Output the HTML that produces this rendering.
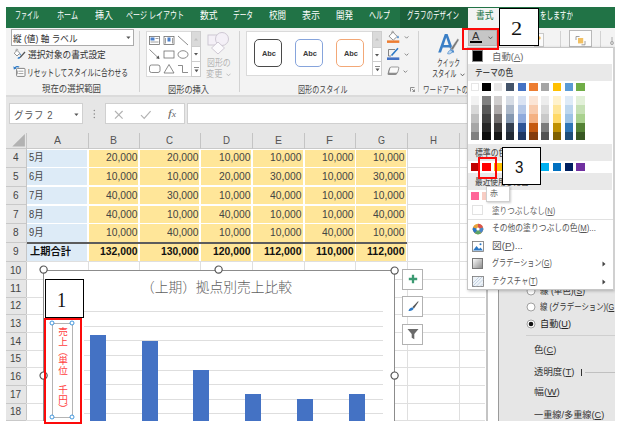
<!DOCTYPE html>
<html lang="ja"><head><meta charset="utf-8"><title>Excel</title><style>
html,body{margin:0;padding:0;background:#fff;}
body{width:620px;height:428px;position:relative;overflow:hidden;font-family:'Liberation Sans','Noto Sans CJK JP',sans-serif;}
.b{position:absolute;display:block;}
.t{position:absolute;white-space:nowrap;transform-origin:0 50%;display:block;}
u{text-decoration:underline;text-underline-offset:1px;}
</style></head><body>
<div class="b" style="left:6px;top:7px;width:609px;height:20.5px;background:#217346;"></div>
<div class="b" style="left:400px;top:7px;width:68px;height:20.5px;background:#1c5f3a;"></div>
<div class="b" style="left:468px;top:8px;width:32px;height:20px;background:#f3f3f3;"></div>
<div class="b" style="left:6px;top:27.5px;width:609px;height:67.7px;background:#f3f3f3;"></div>
<div class="b" style="left:6px;top:95.2px;width:609px;height:35.8px;background:#e6e6e6;"></div>
<div class="b" style="left:6px;top:95.2px;width:609px;height:1.3999999999999915px;background:#dbdbdb;"></div>
<span class="t" id="t0" style="left:15px;top:9.3px;font-size:10px;line-height:14.0px;color:#fff;font-weight:400;font-family:'Liberation Sans','Noto Sans CJK JP',sans-serif;transform:scaleX(0.6);">ファイル</span>
<span class="t" id="t1" style="left:57px;top:9.3px;font-size:10px;line-height:14.0px;color:#fff;font-weight:400;font-family:'Liberation Sans','Noto Sans CJK JP',sans-serif;transform:scaleX(0.707);">ホーム</span>
<span class="t" id="t2" style="left:94.5px;top:9.3px;font-size:10px;line-height:14.0px;color:#fff;font-weight:400;font-family:'Liberation Sans','Noto Sans CJK JP',sans-serif;transform:scaleX(0.9);">挿入</span>
<span class="t" id="t3" style="left:126px;top:9.3px;font-size:10px;line-height:14.0px;color:#fff;font-weight:400;font-family:'Liberation Sans','Noto Sans CJK JP',sans-serif;transform:scaleX(0.7022);">ページ レイアウト</span>
<span class="t" id="t4" style="left:200px;top:9.3px;font-size:10px;line-height:14.0px;color:#fff;font-weight:400;font-family:'Liberation Sans','Noto Sans CJK JP',sans-serif;transform:scaleX(0.875);">数式</span>
<span class="t" id="t5" style="left:233px;top:9.3px;font-size:10px;line-height:14.0px;color:#fff;font-weight:400;font-family:'Liberation Sans','Noto Sans CJK JP',sans-serif;transform:scaleX(0.6667);">データ</span>
<span class="t" id="t6" style="left:269px;top:9.3px;font-size:10px;line-height:14.0px;color:#fff;font-weight:400;font-family:'Liberation Sans','Noto Sans CJK JP',sans-serif;transform:scaleX(0.85);">校閲</span>
<span class="t" id="t7" style="left:302px;top:9.3px;font-size:10px;line-height:14.0px;color:#fff;font-weight:400;font-family:'Liberation Sans','Noto Sans CJK JP',sans-serif;transform:scaleX(0.9);">表示</span>
<span class="t" id="t8" style="left:336px;top:9.3px;font-size:10px;line-height:14.0px;color:#fff;font-weight:400;font-family:'Liberation Sans','Noto Sans CJK JP',sans-serif;transform:scaleX(0.85);">開発</span>
<span class="t" id="t9" style="left:369px;top:9.3px;font-size:10px;line-height:14.0px;color:#fff;font-weight:400;font-family:'Liberation Sans','Noto Sans CJK JP',sans-serif;transform:scaleX(0.7);">ヘルプ</span>
<span class="t" id="t10" style="left:407px;top:9.3px;font-size:10px;line-height:14.0px;color:#fff;font-weight:400;font-family:'Liberation Sans','Noto Sans CJK JP',sans-serif;transform:scaleX(0.65);">グラフのデザイン</span>
<span class="t" id="t11" style="left:475.5px;top:9.3px;font-size:10px;line-height:14.0px;color:#217346;font-weight:400;font-family:'Liberation Sans','Noto Sans CJK JP',sans-serif;transform:scaleX(0.875);">書式</span>
<span class="t" id="t12" style="left:540px;top:9.3px;font-size:10px;line-height:14.0px;color:#fff;font-weight:400;font-family:'Liberation Sans','Noto Sans CJK JP',sans-serif;transform:scaleX(0.66);">をしますか</span>
<div class="b" style="left:11px;top:29.4px;width:122.6px;height:16.800000000000004px;background:#fff;border:1px solid #ababab;box-sizing:border-box;"></div>
<span class="t" id="t13" style="left:12.5px;top:31.95px;font-size:9.5px;line-height:13.3px;color:#333;font-weight:400;font-family:'Liberation Sans','Noto Sans CJK JP',sans-serif;transform:scaleX(0.9053);">縦 (値) 軸 ラベル</span>
<svg class="b" style="left:126px;top:36.3px" width="5" height="4" viewBox="0 0 5 4"><path d="M0.3 0.5 L4.5 0.5 L2.4 3Z" fill="#555"/></svg>
<svg class="b" style="left:13px;top:48px" width="13" height="13" viewBox="0 0 13 13"><path d="M1.2 5.2 L4 2.4 L6.8 5.2 L4 8Z" fill="#fff" stroke="#777" stroke-width="0.8"/><path d="M3 3 C2.6 0.8 4.6 0.3 5 2.4" fill="none" stroke="#777" stroke-width="0.7"/><path d="M7 9.5 L12 4" stroke="#555" stroke-width="1.2"/><path d="M4.5 10.5 C5 9 6.2 8.6 7.2 9.3 C7 10.8 5.8 11.2 4.5 10.5Z" fill="#2b78c5"/><path d="M7.2 5.6 c0.7 0.9 0.9 1.5 0 2 c-0.9 -0.5 -0.7 -1.1 0 -2Z" fill="#2b78c5"/></svg>
<span class="t" id="t14" style="left:27.8px;top:48.35px;font-size:9.5px;line-height:13.3px;color:#333;font-weight:400;font-family:'Liberation Sans','Noto Sans CJK JP',sans-serif;transform:scaleX(0.9086);">選択対象の書式設定</span>
<svg class="b" style="left:13px;top:65px" width="13" height="13" viewBox="0 0 13 13"><rect x="3.6" y="3.4" width="8.4" height="8" rx="0.8" fill="#fff" stroke="#777" stroke-width="0.9"/><path d="M5.4 6.2H10.4M5.4 8.6H10.4" stroke="#888" stroke-width="0.8"/><path d="M4.4 5.6V9.2" stroke="#888" stroke-width="0.7"/><path d="M1.8 3.2 C2.6 1.4 4.6 1.2 6.2 2" fill="none" stroke="#2b78c5" stroke-width="1.2"/><path d="M0.4 1.2 L0.8 4.4 L3.6 3.4Z" fill="#2b78c5"/></svg>
<span class="t" id="t15" style="left:27.4px;top:65.65px;font-size:9.5px;line-height:13.3px;color:#333;font-weight:400;font-family:'Liberation Sans','Noto Sans CJK JP',sans-serif;transform:scaleX(0.7095);">リセットしてスタイルに合わせる</span>
<span class="t" id="t16" style="left:42.3px;top:82.45px;font-size:9.5px;line-height:13.3px;color:#444;font-weight:400;font-family:'Liberation Sans','Noto Sans CJK JP',sans-serif;transform:scaleX(0.887);">現在の選択範囲</span>
<div class="b" style="left:139px;top:31px;width:1px;height:61px;background:#d2d2d2;"></div>
<div class="b" style="left:146.2px;top:31.4px;width:55.10000000000002px;height:45.800000000000004px;background:#fff;border:1px solid #dadada;box-sizing:border-box;"></div>
<div class="b" style="left:191px;top:31.4px;width:10.300000000000011px;height:16.0px;background:#dadada;border:1px solid #cdcdcd;box-sizing:border-box;"></div>
<div class="b" style="left:191px;top:46.4px;width:10.300000000000011px;height:15.700000000000003px;background:#fff;border:1px solid #cdcdcd;box-sizing:border-box;"></div>
<div class="b" style="left:191px;top:61.1px;width:10.300000000000011px;height:16.1px;background:#fff;border:1px solid #cdcdcd;box-sizing:border-box;"></div>
<svg class="b" style="left:194.2px;top:38px" width="4" height="3" viewBox="0 0 4 3"><path d="M0 2.4 L2 0 L4 2.4Z" fill="#c0c0c0"/></svg>
<svg class="b" style="left:194.2px;top:53.3px" width="4" height="3" viewBox="0 0 4 3"><path d="M0 0 L4 0 L2 2.4Z" fill="#555"/></svg>
<svg class="b" style="left:193.7px;top:66.5px" width="5" height="6" viewBox="0 0 5 6"><path d="M0 0.5H5" stroke="#666" stroke-width="0.75"/><path d="M0.5 2.6 L4.5 2.6 L2.5 5.2Z" fill="#555"/></svg>
<svg class="b" style="left:147px;top:32px" width="44" height="44" viewBox="0 0 44 44"><rect x="2.5" y="4.5" width="10" height="8" fill="#fff" stroke="#666" stroke-width="0.75"/><rect x="3.5" y="5.5" width="4" height="3" fill="#4a7fcb"/><path d="M8.5 6.5H11.5M3.5 10H11.5" stroke="#777" stroke-width="0.7"/><rect x="17" y="4.5" width="10" height="8" fill="#fff" stroke="#666" stroke-width="0.75"/><rect x="20.5" y="5.5" width="3" height="4" fill="#4a7fcb"/><path d="M18.5 6V11.5M25.5 6V11.5" stroke="#777" stroke-width="0.7"/><path d="M31 4 L41 13" stroke="#666" stroke-width="0.75"/><path d="M2.5 17.5 L12 26.5" stroke="#666" stroke-width="0.75"/><path d="M12.5 27 L9 26.3 L11.6 23.6Z" fill="#555"/><rect x="17" y="19" width="10" height="7" fill="#fff" stroke="#666" stroke-width="0.75"/><ellipse cx="36" cy="22.5" rx="5" ry="3.8" fill="#fff" stroke="#666" stroke-width="0.75"/><rect x="2.5" y="33" width="10.5" height="7.5" rx="2" fill="#fff" stroke="#666" stroke-width="0.75"/><path d="M22 32.5 L27 41 L17 41Z" fill="#fff" stroke="#666" stroke-width="0.75"/><path d="M31 33.5 H35.5 V40.5 H41" fill="none" stroke="#666" stroke-width="0.75"/></svg>
<svg class="b" style="left:206px;top:31px" width="26" height="24" viewBox="0 0 26 24"><rect x="2" y="4" width="11" height="10" fill="#f4f0f7" stroke="#c9c3cf" stroke-width="0.9"/><circle cx="16" cy="8" r="6.5" fill="#f4f0f7" stroke="#c9c3cf" stroke-width="0.9"/><path d="M12 11 L18.5 17 L12 23 L5.5 17Z" fill="#fbfafc" stroke="#c9c3cf" stroke-width="0.9"/></svg>
<span class="t" id="t17" style="left:206.6px;top:56.15px;font-size:9.5px;line-height:13.3px;color:#b4b4b4;font-weight:400;font-family:'Liberation Sans','Noto Sans CJK JP',sans-serif;transform:scaleX(0.8311);">図形の</span>
<span class="t" id="t18" style="left:206.2px;top:66.95px;font-size:9.5px;line-height:13.3px;color:#b4b4b4;font-weight:400;font-family:'Liberation Sans','Noto Sans CJK JP',sans-serif;transform:scaleX(0.8572);">変更</span>
<svg class="b" style="left:226px;top:72.5px" width="5" height="4" viewBox="0 0 5 4"><path d="M0.5 0.7 L2.5 2.8 L4.5 0.7" fill="none" stroke="#b4b4b4" stroke-width="0.8"/></svg>
<span class="t" id="t19" style="left:167.8px;top:82.95px;font-size:9.5px;line-height:13.3px;color:#444;font-weight:400;font-family:'Liberation Sans','Noto Sans CJK JP',sans-serif;transform:scaleX(0.8629);">図形の挿入</span>
<div class="b" style="left:239px;top:31px;width:1px;height:61px;background:#d2d2d2;"></div>
<div class="b" style="left:246.2px;top:31.4px;width:136.2px;height:44.4px;background:#fff;border:1px solid #dadada;box-sizing:border-box;"></div>
<div class="b" style="left:372px;top:31.4px;width:10.399999999999977px;height:16.300000000000004px;background:#dadada;border:1px solid #cdcdcd;box-sizing:border-box;"></div>
<div class="b" style="left:372px;top:46.7px;width:10.399999999999977px;height:15.299999999999997px;background:#fff;border:1px solid #cdcdcd;box-sizing:border-box;"></div>
<div class="b" style="left:372px;top:61px;width:10.399999999999977px;height:14.799999999999997px;background:#fff;border:1px solid #cdcdcd;box-sizing:border-box;"></div>
<svg class="b" style="left:375.2px;top:38px" width="4" height="3" viewBox="0 0 4 3"><path d="M0 2.4 L2 0 L4 2.4Z" fill="#c0c0c0"/></svg>
<svg class="b" style="left:375.2px;top:53.5px" width="4" height="3" viewBox="0 0 4 3"><path d="M0 0 L4 0 L2 2.4Z" fill="#555"/></svg>
<svg class="b" style="left:374.6px;top:65.5px" width="5" height="6" viewBox="0 0 5 6"><path d="M0 0.5H5" stroke="#666" stroke-width="0.75"/><path d="M0.5 2.6 L4.5 2.6 L2.5 5.2Z" fill="#555"/></svg>
<div class="b" style="left:254.3px;top:39.2px;width:28.099999999999966px;height:28.099999999999994px;background:#fff;border:1.3px solid #4a4a4a;box-sizing:border-box;border-radius:5px;"></div>
<div class="b" style="left:295.3px;top:39.2px;width:28.099999999999966px;height:28.099999999999994px;background:#fff;border:1px solid #86a4dc;box-sizing:border-box;border-radius:5px;"></div>
<div class="b" style="left:336.3px;top:39.2px;width:28.099999999999966px;height:28.099999999999994px;background:#fff;border:1px solid #f3a877;box-sizing:border-box;border-radius:5px;"></div>
<span class="t" id="t20" style="left:261.5px;top:47.6px;font-size:8px;line-height:11.2px;color:#3a3a3a;font-weight:700;font-family:'Liberation Sans','Noto Sans CJK JP',sans-serif;transform:scaleX(0.9256);">Abc</span>
<span class="t" id="t21" style="left:302.5px;top:47.6px;font-size:8px;line-height:11.2px;color:#3a3a3a;font-weight:700;font-family:'Liberation Sans','Noto Sans CJK JP',sans-serif;transform:scaleX(0.9256);">Abc</span>
<span class="t" id="t22" style="left:343.5px;top:47.6px;font-size:8px;line-height:11.2px;color:#3a3a3a;font-weight:700;font-family:'Liberation Sans','Noto Sans CJK JP',sans-serif;transform:scaleX(0.9256);">Abc</span>
<svg class="b" style="left:386px;top:30px" width="26" height="48" viewBox="0 0 26 48"><path d="M3 6.2 L7 2.2 L11.2 6.4 L7.2 10.2Z" fill="#fff" stroke="#777" stroke-width="0.8"/><path d="M5.8 3.2 C5.4 0.9 7.4 0.4 7.8 2.6" fill="none" stroke="#777" stroke-width="0.7"/><path d="M12 5.6 c0.9 1.3 1.2 2.1 0 2.8 c-1.2 -0.7 -0.9 -1.5 0 -2.8Z" fill="#2b78c5"/><rect x="1" y="10.4" width="12.3" height="2.5" fill="#ed7d31"/><path d="M2.5 26 V19.5 H9" fill="none" stroke="#777" stroke-width="0.9"/><path d="M2.5 26 H5" stroke="#777" stroke-width="0.9"/><path d="M5.5 25.5 L12 18.2" stroke="#2b78c5" stroke-width="1.6"/><rect x="1" y="27.4" width="12.3" height="2.6" fill="#4472c4"/><path d="M4.6 37.4 H11.6 Q13 37.4 12.6 38.8 L11.2 43.6 Q10.8 45 9.4 45 H2.6 Q1.2 45 1.6 43.6 L3 38.8 Q3.4 37.4 4.6 37.4Z" fill="#8a8a8a"/><path d="M5.4 37 H11.8 Q13.2 37 12.8 38.2 L11.8 42 Q11.4 43.2 10 43.2 H3.8 Q2.4 43.2 2.8 42 L3.8 38.2 Q4.2 37 5.4 37Z" fill="#fafafa" stroke="#777" stroke-width="0.7"/><path d="M18.8 6.4 l1.8 1.8 l1.8 -1.8" fill="none" stroke="#666" stroke-width="0.75"/><path d="M18.8 23.6 l1.8 1.8 l1.8 -1.8" fill="none" stroke="#666" stroke-width="0.75"/><path d="M17.6 40.6 l1.8 1.8 l1.8 -1.8" fill="none" stroke="#666" stroke-width="0.75"/></svg>
<span class="t" id="t23" style="left:298px;top:82.85px;font-size:9.5px;line-height:13.3px;color:#444;font-weight:400;font-family:'Liberation Sans','Noto Sans CJK JP',sans-serif;transform:scaleX(0.7442);">図形のスタイル</span>
<svg class="b" style="left:410px;top:87px" width="5" height="5" viewBox="0 0 5 5"><path d="M0.5 4.5V0.5H4.5" fill="none" stroke="#777" stroke-width="0.8"/><path d="M2 2L4.5 4.5M4.5 2.5V4.5H2.5" fill="none" stroke="#777" stroke-width="0.8"/></svg>
<div class="b" style="left:417.8px;top:31px;width:1.0px;height:61px;background:#d2d2d2;"></div>
<svg class="b" style="left:436px;top:31px" width="26" height="26" viewBox="0 0 26 26"><path d="M2.2 21.5 L8.8 3 H11.6 L18.2 21.5 H15.4 L13.6 16.4 H6.8 L5 21.5Z M7.7 13.9 H12.7 L10.2 6.6Z" fill="#3b7fc6" fill-rule="evenodd"/><path d="M14.6 17.6 L21.6 7.6 L23.2 8.8 L16.8 19.2Z" fill="#7a7a7a" stroke="#f1f1f1" stroke-width="0.5"/><path d="M11.6 22.8 C12.2 19.6 14.4 18.4 16.6 19.8 C16.2 22.2 14 23.4 11.6 22.8Z" fill="#bcd7f0" stroke="#3b7fc6" stroke-width="0.6"/></svg>
<span class="t" id="t24" style="left:437px;top:56.35px;font-size:9.5px;line-height:13.3px;color:#333;font-weight:400;font-family:'Liberation Sans','Noto Sans CJK JP',sans-serif;transform:scaleX(0.605);">クイック</span>
<span class="t" id="t25" style="left:431.5px;top:66.75px;font-size:9.5px;line-height:13.3px;color:#333;font-weight:400;font-family:'Liberation Sans','Noto Sans CJK JP',sans-serif;transform:scaleX(0.6445);">スタイル</span>
<svg class="b" style="left:459.5px;top:72.8px" width="5" height="4" viewBox="0 0 5 4"><path d="M0.5 0.7 L2.5 2.8 L4.5 0.7" fill="none" stroke="#444" stroke-width="0.8"/></svg>
<span class="t" id="t26" style="left:422.6px;top:82.85px;font-size:9.5px;line-height:13.3px;color:#444;font-weight:400;font-family:'Liberation Sans','Noto Sans CJK JP',sans-serif;transform:scaleX(0.6885);">ワードアートの</span>
<div class="b" style="left:534px;top:33px;width:9.799999999999955px;height:14px;background:#fbfbfb;border:1px solid #c9c9c9;box-sizing:border-box;"></div>
<svg class="b" style="left:537px;top:36px" width="5" height="4" viewBox="0 0 5 4"><circle cx="2" cy="2" r="1.7" fill="#f0b44c"/></svg>
<div class="b" style="left:560px;top:31px;width:1px;height:15.5px;background:#d2d2d2;"></div>
<div class="b" style="left:568.5px;top:30.1px;width:23.299999999999955px;height:16.9px;background:#fdfdfd;border:1px solid #b9b9b9;box-sizing:border-box;"></div>
<svg class="b" style="left:575px;top:35px" width="12" height="11" viewBox="0 0 12 11"><rect x="3" y="3" width="5.2" height="5.4" fill="#f2c062"/><path d="M1 5 V1.5 H4.5" fill="none" stroke="#888" stroke-width="0.8"/><path d="M10 6 V9.8 H6.5" fill="none" stroke="#888" stroke-width="0.8"/></svg>
<div class="b" style="left:600px;top:31px;width:1px;height:15.5px;background:#d2d2d2;"></div>
<svg class="b" style="left:609px;top:35px" width="6" height="12" viewBox="0 0 6 12"><path d="M3 2V10" fill="none" stroke="#999" stroke-width="0.8"/><circle cx="3" cy="8" r="1.6" fill="none" stroke="#999" stroke-width="0.7"/></svg>
<div class="b" style="left:9.4px;top:103.4px;width:74.1px;height:20.799999999999997px;background:#fff;border:1px solid #d0d0d0;box-sizing:border-box;"></div>
<span class="t" id="t27" style="left:14.1px;top:108.9px;font-size:10px;line-height:14.0px;color:#555;font-weight:400;font-family:'Liberation Sans','Noto Sans CJK JP',sans-serif;letter-spacing:0.6px;transform:scaleX(0.9457);">グラフ 2</span>
<svg class="b" style="left:74.4px;top:113px" width="5" height="4" viewBox="0 0 5 4"><path d="M0.3 0.5 L4.5 0.5 L2.4 3Z" fill="#555"/></svg>
<svg class="b" style="left:93px;top:109px" width="3" height="10" viewBox="0 0 3 10"><circle cx="1.3" cy="1.5" r="0.75" fill="#8a8a8a"/><circle cx="1.3" cy="5" r="0.75" fill="#8a8a8a"/><circle cx="1.3" cy="8.5" r="0.75" fill="#8a8a8a"/></svg>
<div class="b" style="left:105.2px;top:103.4px;width:80.10000000000001px;height:20.799999999999997px;background:#fff;border:1px solid #d0d0d0;box-sizing:border-box;"></div>
<svg class="b" style="left:113.5px;top:109.5px" width="10" height="10" viewBox="0 0 10 10"><path d="M1 1L8.6 8.6M8.6 1L1 8.6" stroke="#b2b2b2" stroke-width="1.15"/></svg>
<svg class="b" style="left:139.8px;top:109.5px" width="12" height="10" viewBox="0 0 12 10"><path d="M1 5.2L4.2 8.4L10.6 1.2" fill="none" stroke="#b2b2b2" stroke-width="1.15"/></svg>
<span class="t" id="t28" style="left:167.5px;top:106.65px;font-size:10.5px;line-height:14.7px;color:#666;font-weight:400;font-family:'Liberation Serif','Noto Serif CJK SC',serif;transform:scaleX(1.2768);"><i>f</i><i style="font-size:7.5px">x</i></span>
<div class="b" style="left:187.3px;top:103.4px;width:427.7px;height:20.799999999999997px;background:#fff;border:1px solid #d0d0d0;box-sizing:border-box;"></div>
<div class="b" style="left:6px;top:131px;width:479px;height:289.8px;background:#fff;"></div>
<div class="b" style="left:6px;top:131px;width:479px;height:18px;background:#e6e6e6;"></div>
<div class="b" style="left:6px;top:148px;width:479px;height:1px;background:#c9c9c9;"></div>
<svg class="b" style="left:10px;top:133px" width="16" height="15" viewBox="0 0 16 15"><path d="M14.9 0.9 V13.5 H2.3Z" fill="#b2b2b2"/></svg>
<span class="t" id="t29" style="left:53.5px;top:133.25px;font-size:10.8px;line-height:15.1px;color:#555;font-weight:400;font-family:'Liberation Sans','Noto Sans CJK JP',sans-serif;transform:scaleX(0.9718);">A</span>
<span class="t" id="t30" style="left:110.2px;top:133.25px;font-size:10.8px;line-height:15.1px;color:#555;font-weight:400;font-family:'Liberation Sans','Noto Sans CJK JP',sans-serif;transform:scaleX(0.9718);">B</span>
<span class="t" id="t31" style="left:166.4px;top:133.25px;font-size:10.8px;line-height:15.1px;color:#555;font-weight:400;font-family:'Liberation Sans','Noto Sans CJK JP',sans-serif;transform:scaleX(0.896);">C</span>
<span class="t" id="t32" style="left:222.9px;top:133.25px;font-size:10.8px;line-height:15.1px;color:#555;font-weight:400;font-family:'Liberation Sans','Noto Sans CJK JP',sans-serif;transform:scaleX(0.896);">D</span>
<span class="t" id="t33" style="left:274.7px;top:133.25px;font-size:10.8px;line-height:15.1px;color:#555;font-weight:400;font-family:'Liberation Sans','Noto Sans CJK JP',sans-serif;transform:scaleX(0.9718);">E</span>
<span class="t" id="t34" style="left:326.25px;top:133.25px;font-size:10.8px;line-height:15.1px;color:#555;font-weight:400;font-family:'Liberation Sans','Noto Sans CJK JP',sans-serif;transform:scaleX(1.0591);">F</span>
<span class="t" id="t35" style="left:377.75px;top:133.25px;font-size:10.8px;line-height:15.1px;color:#555;font-weight:400;font-family:'Liberation Sans','Noto Sans CJK JP',sans-serif;transform:scaleX(0.8327);">G</span>
<span class="t" id="t36" style="left:429.5px;top:133.25px;font-size:10.8px;line-height:15.1px;color:#555;font-weight:400;font-family:'Liberation Sans','Noto Sans CJK JP',sans-serif;transform:scaleX(0.896);">H</span>
<div class="b" style="left:25.5px;top:133px;width:1.0px;height:16px;background:#c4c4c4;"></div>
<div class="b" style="left:87.5px;top:133px;width:1.0px;height:16px;background:#c4c4c4;"></div>
<div class="b" style="left:138.9px;top:133px;width:1.0px;height:16px;background:#c4c4c4;"></div>
<div class="b" style="left:199.9px;top:133px;width:1.0px;height:16px;background:#c4c4c4;"></div>
<div class="b" style="left:251.9px;top:133px;width:1.0px;height:16px;background:#c4c4c4;"></div>
<div class="b" style="left:303.5px;top:133px;width:1.0px;height:16px;background:#c4c4c4;"></div>
<div class="b" style="left:355.0px;top:133px;width:1.0px;height:16px;background:#c4c4c4;"></div>
<div class="b" style="left:406.5px;top:133px;width:1.0px;height:16px;background:#c4c4c4;"></div>
<div class="b" style="left:458.5px;top:133px;width:1.0px;height:16px;background:#c4c4c4;"></div>
<div class="b" style="left:6px;top:149px;width:20px;height:271.8px;background:#e6e6e6;"></div>
<div class="b" style="left:26px;top:133px;width:1px;height:287.8px;background:#c6c6c6;"></div>
<span class="t" id="t37" style="left:12.899999999999999px;top:151.46px;font-size:10px;line-height:14.0px;color:#444;font-weight:400;font-family:'Liberation Sans','Noto Sans CJK JP',sans-serif;transform:scaleX(1.0067);">4</span>
<div class="b" style="left:6px;top:167.02px;width:20px;height:1.0px;background:#c9c9c9;"></div>
<span class="t" id="t38" style="left:12.899999999999999px;top:170.18px;font-size:10px;line-height:14.0px;color:#444;font-weight:400;font-family:'Liberation Sans','Noto Sans CJK JP',sans-serif;transform:scaleX(1.0067);">5</span>
<div class="b" style="left:6px;top:185.74px;width:20px;height:1.0px;background:#c9c9c9;"></div>
<span class="t" id="t39" style="left:12.899999999999999px;top:188.9px;font-size:10px;line-height:14.0px;color:#444;font-weight:400;font-family:'Liberation Sans','Noto Sans CJK JP',sans-serif;transform:scaleX(1.0067);">6</span>
<div class="b" style="left:6px;top:204.46px;width:20px;height:1.0px;background:#c9c9c9;"></div>
<span class="t" id="t40" style="left:12.899999999999999px;top:207.62px;font-size:10px;line-height:14.0px;color:#444;font-weight:400;font-family:'Liberation Sans','Noto Sans CJK JP',sans-serif;transform:scaleX(1.0067);">7</span>
<div class="b" style="left:6px;top:223.18px;width:20px;height:1.0px;background:#c9c9c9;"></div>
<span class="t" id="t41" style="left:12.899999999999999px;top:226.34px;font-size:10px;line-height:14.0px;color:#444;font-weight:400;font-family:'Liberation Sans','Noto Sans CJK JP',sans-serif;transform:scaleX(1.0067);">8</span>
<div class="b" style="left:6px;top:241.9px;width:20px;height:1.0px;background:#c9c9c9;"></div>
<span class="t" id="t42" style="left:12.899999999999999px;top:245.45px;font-size:10px;line-height:14.0px;color:#444;font-weight:400;font-family:'Liberation Sans','Noto Sans CJK JP',sans-serif;transform:scaleX(1.0067);">9</span>
<div class="b" style="left:6px;top:261.4px;width:20px;height:1.0px;background:#c9c9c9;"></div>
<span class="t" id="t43" style="left:10.1px;top:264.03px;font-size:10px;line-height:14.0px;color:#444;font-weight:400;font-family:'Liberation Sans','Noto Sans CJK JP',sans-serif;transform:scaleX(1.0067);">10</span>
<div class="b" style="left:6px;top:279.06px;width:20px;height:1.0px;background:#c9c9c9;"></div>
<span class="t" id="t44" style="left:10.1px;top:281.69px;font-size:10px;line-height:14.0px;color:#444;font-weight:400;font-family:'Liberation Sans','Noto Sans CJK JP',sans-serif;transform:scaleX(1.0779);">11</span>
<div class="b" style="left:6px;top:296.71999999999997px;width:20px;height:1.0px;background:#c9c9c9;"></div>
<span class="t" id="t45" style="left:10.1px;top:299.35px;font-size:10px;line-height:14.0px;color:#444;font-weight:400;font-family:'Liberation Sans','Noto Sans CJK JP',sans-serif;transform:scaleX(1.0067);">12</span>
<div class="b" style="left:6px;top:314.38px;width:20px;height:1.0px;background:#c9c9c9;"></div>
<span class="t" id="t46" style="left:10.1px;top:317.01px;font-size:10px;line-height:14.0px;color:#444;font-weight:400;font-family:'Liberation Sans','Noto Sans CJK JP',sans-serif;transform:scaleX(1.0067);">13</span>
<div class="b" style="left:6px;top:332.03999999999996px;width:20px;height:1.0px;background:#c9c9c9;"></div>
<span class="t" id="t47" style="left:10.1px;top:334.67px;font-size:10px;line-height:14.0px;color:#444;font-weight:400;font-family:'Liberation Sans','Noto Sans CJK JP',sans-serif;transform:scaleX(1.0067);">14</span>
<div class="b" style="left:6px;top:349.7px;width:20px;height:1.0px;background:#c9c9c9;"></div>
<span class="t" id="t48" style="left:10.1px;top:352.33px;font-size:10px;line-height:14.0px;color:#444;font-weight:400;font-family:'Liberation Sans','Noto Sans CJK JP',sans-serif;transform:scaleX(1.0067);">15</span>
<div class="b" style="left:6px;top:367.36px;width:20px;height:1.0px;background:#c9c9c9;"></div>
<span class="t" id="t49" style="left:10.1px;top:369.99px;font-size:10px;line-height:14.0px;color:#444;font-weight:400;font-family:'Liberation Sans','Noto Sans CJK JP',sans-serif;transform:scaleX(1.0067);">16</span>
<div class="b" style="left:6px;top:385.02px;width:20px;height:1.0px;background:#c9c9c9;"></div>
<span class="t" id="t50" style="left:10.1px;top:387.65px;font-size:10px;line-height:14.0px;color:#444;font-weight:400;font-family:'Liberation Sans','Noto Sans CJK JP',sans-serif;transform:scaleX(1.0067);">17</span>
<div class="b" style="left:6px;top:402.67999999999995px;width:20px;height:1.0px;background:#c9c9c9;"></div>
<span class="t" id="t51" style="left:10.1px;top:405.31px;font-size:10px;line-height:14.0px;color:#444;font-weight:400;font-family:'Liberation Sans','Noto Sans CJK JP',sans-serif;transform:scaleX(1.0067);">18</span>
<div class="b" style="left:6px;top:420.34px;width:20px;height:1.0px;background:#c9c9c9;"></div>
<div class="b" style="left:26px;top:261.4px;width:459px;height:1.0px;background:#dfdfdf;"></div>
<div class="b" style="left:26px;top:279.06px;width:459px;height:1.0px;background:#dfdfdf;"></div>
<div class="b" style="left:26px;top:296.71999999999997px;width:459px;height:1.0px;background:#dfdfdf;"></div>
<div class="b" style="left:26px;top:314.38px;width:459px;height:1.0px;background:#dfdfdf;"></div>
<div class="b" style="left:26px;top:332.03999999999996px;width:459px;height:1.0px;background:#dfdfdf;"></div>
<div class="b" style="left:26px;top:349.7px;width:459px;height:1.0px;background:#dfdfdf;"></div>
<div class="b" style="left:26px;top:367.36px;width:459px;height:1.0px;background:#dfdfdf;"></div>
<div class="b" style="left:26px;top:385.02px;width:459px;height:1.0px;background:#dfdfdf;"></div>
<div class="b" style="left:26px;top:402.67999999999995px;width:459px;height:1.0px;background:#dfdfdf;"></div>
<div class="b" style="left:26px;top:420.34px;width:459px;height:1.0px;background:#dfdfdf;"></div>
<div class="b" style="left:407px;top:167.02px;width:78px;height:1.0px;background:#dfdfdf;"></div>
<div class="b" style="left:407px;top:185.74px;width:78px;height:1.0px;background:#dfdfdf;"></div>
<div class="b" style="left:407px;top:204.46px;width:78px;height:1.0px;background:#dfdfdf;"></div>
<div class="b" style="left:407px;top:223.18px;width:78px;height:1.0px;background:#dfdfdf;"></div>
<div class="b" style="left:407px;top:241.9px;width:78px;height:1.0px;background:#dfdfdf;"></div>
<div class="b" style="left:87.5px;top:261.5px;width:1.0px;height:159.3px;background:#dfdfdf;"></div>
<div class="b" style="left:138.9px;top:261.5px;width:1.0px;height:159.3px;background:#dfdfdf;"></div>
<div class="b" style="left:199.9px;top:261.5px;width:1.0px;height:159.3px;background:#dfdfdf;"></div>
<div class="b" style="left:251.9px;top:261.5px;width:1.0px;height:159.3px;background:#dfdfdf;"></div>
<div class="b" style="left:303.5px;top:261.5px;width:1.0px;height:159.3px;background:#dfdfdf;"></div>
<div class="b" style="left:355.0px;top:261.5px;width:1.0px;height:159.3px;background:#dfdfdf;"></div>
<div class="b" style="left:406.5px;top:261.5px;width:1.0px;height:159.3px;background:#dfdfdf;"></div>
<div class="b" style="left:458.5px;top:261.5px;width:1.0px;height:159.3px;background:#dfdfdf;"></div>
<div class="b" style="left:406.5px;top:149px;width:1.0px;height:271.8px;background:#dfdfdf;"></div>
<div class="b" style="left:458.5px;top:149px;width:1.0px;height:271.8px;background:#dfdfdf;"></div>
<div class="b" style="left:27.4px;top:149.60000000000002px;width:59.4px;height:17.119999999999976px;background:#ddebf7;"></div>
<span class="t" id="t52" style="left:29px;top:151.46px;font-size:10px;line-height:14.0px;color:#444;font-weight:400;font-family:'Liberation Sans','Noto Sans CJK JP',sans-serif;transform:scaleX(0.9317);">5月</span>
<div class="b" style="left:88.9px;top:149.60000000000002px;width:49.599999999999994px;height:17.119999999999976px;background:#ffe699;"></div>
<span class="t" id="t53" style="left:105.70000000000002px;top:151.46px;font-size:10px;line-height:14.0px;color:#444;font-weight:400;font-family:'Liberation Sans','Noto Sans CJK JP',sans-serif;transform:scaleX(1.0296);">20,000</span>
<div class="b" style="left:140.3px;top:149.60000000000002px;width:59.19999999999999px;height:17.119999999999976px;background:#ffe699;"></div>
<span class="t" id="t54" style="left:166.70000000000002px;top:151.46px;font-size:10px;line-height:14.0px;color:#444;font-weight:400;font-family:'Liberation Sans','Noto Sans CJK JP',sans-serif;transform:scaleX(1.0296);">20,000</span>
<div class="b" style="left:201.3px;top:149.60000000000002px;width:50.19999999999999px;height:17.119999999999976px;background:#ffe699;"></div>
<span class="t" id="t55" style="left:218.70000000000002px;top:151.46px;font-size:10px;line-height:14.0px;color:#444;font-weight:400;font-family:'Liberation Sans','Noto Sans CJK JP',sans-serif;transform:scaleX(1.0296);">10,000</span>
<div class="b" style="left:253.3px;top:149.60000000000002px;width:49.80000000000001px;height:17.119999999999976px;background:#ffe699;"></div>
<span class="t" id="t56" style="left:270.3px;top:151.46px;font-size:10px;line-height:14.0px;color:#444;font-weight:400;font-family:'Liberation Sans','Noto Sans CJK JP',sans-serif;transform:scaleX(1.0296);">10,000</span>
<div class="b" style="left:304.9px;top:149.60000000000002px;width:49.700000000000045px;height:17.119999999999976px;background:#ffe699;"></div>
<span class="t" id="t57" style="left:321.8px;top:151.46px;font-size:10px;line-height:14.0px;color:#444;font-weight:400;font-family:'Liberation Sans','Noto Sans CJK JP',sans-serif;transform:scaleX(1.0296);">10,000</span>
<div class="b" style="left:356.4px;top:149.60000000000002px;width:49.700000000000045px;height:17.119999999999976px;background:#ffe699;"></div>
<span class="t" id="t58" style="left:373.3px;top:151.46px;font-size:10px;line-height:14.0px;color:#444;font-weight:400;font-family:'Liberation Sans','Noto Sans CJK JP',sans-serif;transform:scaleX(1.0296);">10,000</span>
<div class="b" style="left:27.4px;top:168.32000000000002px;width:59.4px;height:17.119999999999976px;background:#ddebf7;"></div>
<span class="t" id="t59" style="left:29px;top:170.18px;font-size:10px;line-height:14.0px;color:#444;font-weight:400;font-family:'Liberation Sans','Noto Sans CJK JP',sans-serif;transform:scaleX(0.9317);">6月</span>
<div class="b" style="left:88.9px;top:168.32000000000002px;width:49.599999999999994px;height:17.119999999999976px;background:#ffe699;"></div>
<span class="t" id="t60" style="left:105.70000000000002px;top:170.18px;font-size:10px;line-height:14.0px;color:#444;font-weight:400;font-family:'Liberation Sans','Noto Sans CJK JP',sans-serif;transform:scaleX(1.0296);">10,000</span>
<div class="b" style="left:140.3px;top:168.32000000000002px;width:59.19999999999999px;height:17.119999999999976px;background:#ffe699;"></div>
<span class="t" id="t61" style="left:166.70000000000002px;top:170.18px;font-size:10px;line-height:14.0px;color:#444;font-weight:400;font-family:'Liberation Sans','Noto Sans CJK JP',sans-serif;transform:scaleX(1.0296);">10,000</span>
<div class="b" style="left:201.3px;top:168.32000000000002px;width:50.19999999999999px;height:17.119999999999976px;background:#ffe699;"></div>
<span class="t" id="t62" style="left:218.70000000000002px;top:170.18px;font-size:10px;line-height:14.0px;color:#444;font-weight:400;font-family:'Liberation Sans','Noto Sans CJK JP',sans-serif;transform:scaleX(1.0296);">20,000</span>
<div class="b" style="left:253.3px;top:168.32000000000002px;width:49.80000000000001px;height:17.119999999999976px;background:#ffe699;"></div>
<span class="t" id="t63" style="left:270.3px;top:170.18px;font-size:10px;line-height:14.0px;color:#444;font-weight:400;font-family:'Liberation Sans','Noto Sans CJK JP',sans-serif;transform:scaleX(1.0296);">30,000</span>
<div class="b" style="left:304.9px;top:168.32000000000002px;width:49.700000000000045px;height:17.119999999999976px;background:#ffe699;"></div>
<span class="t" id="t64" style="left:321.8px;top:170.18px;font-size:10px;line-height:14.0px;color:#444;font-weight:400;font-family:'Liberation Sans','Noto Sans CJK JP',sans-serif;transform:scaleX(1.0296);">10,000</span>
<div class="b" style="left:356.4px;top:168.32000000000002px;width:49.700000000000045px;height:17.119999999999976px;background:#ffe699;"></div>
<span class="t" id="t65" style="left:373.3px;top:170.18px;font-size:10px;line-height:14.0px;color:#444;font-weight:400;font-family:'Liberation Sans','Noto Sans CJK JP',sans-serif;transform:scaleX(1.0296);">30,000</span>
<div class="b" style="left:27.4px;top:187.04000000000002px;width:59.4px;height:17.119999999999976px;background:#ddebf7;"></div>
<span class="t" id="t66" style="left:29px;top:188.9px;font-size:10px;line-height:14.0px;color:#444;font-weight:400;font-family:'Liberation Sans','Noto Sans CJK JP',sans-serif;transform:scaleX(0.9317);">7月</span>
<div class="b" style="left:88.9px;top:187.04000000000002px;width:49.599999999999994px;height:17.119999999999976px;background:#ffe699;"></div>
<span class="t" id="t67" style="left:105.70000000000002px;top:188.9px;font-size:10px;line-height:14.0px;color:#444;font-weight:400;font-family:'Liberation Sans','Noto Sans CJK JP',sans-serif;transform:scaleX(1.0296);">40,000</span>
<div class="b" style="left:140.3px;top:187.04000000000002px;width:59.19999999999999px;height:17.119999999999976px;background:#ffe699;"></div>
<span class="t" id="t68" style="left:166.70000000000002px;top:188.9px;font-size:10px;line-height:14.0px;color:#444;font-weight:400;font-family:'Liberation Sans','Noto Sans CJK JP',sans-serif;transform:scaleX(1.0296);">30,000</span>
<div class="b" style="left:201.3px;top:187.04000000000002px;width:50.19999999999999px;height:17.119999999999976px;background:#ffe699;"></div>
<span class="t" id="t69" style="left:218.70000000000002px;top:188.9px;font-size:10px;line-height:14.0px;color:#444;font-weight:400;font-family:'Liberation Sans','Noto Sans CJK JP',sans-serif;transform:scaleX(1.0296);">10,000</span>
<div class="b" style="left:253.3px;top:187.04000000000002px;width:49.80000000000001px;height:17.119999999999976px;background:#ffe699;"></div>
<span class="t" id="t70" style="left:270.3px;top:188.9px;font-size:10px;line-height:14.0px;color:#444;font-weight:400;font-family:'Liberation Sans','Noto Sans CJK JP',sans-serif;transform:scaleX(1.0296);">40,000</span>
<div class="b" style="left:304.9px;top:187.04000000000002px;width:49.700000000000045px;height:17.119999999999976px;background:#ffe699;"></div>
<span class="t" id="t71" style="left:321.8px;top:188.9px;font-size:10px;line-height:14.0px;color:#444;font-weight:400;font-family:'Liberation Sans','Noto Sans CJK JP',sans-serif;transform:scaleX(1.0296);">10,000</span>
<div class="b" style="left:356.4px;top:187.04000000000002px;width:49.700000000000045px;height:17.119999999999976px;background:#ffe699;"></div>
<span class="t" id="t72" style="left:373.3px;top:188.9px;font-size:10px;line-height:14.0px;color:#444;font-weight:400;font-family:'Liberation Sans','Noto Sans CJK JP',sans-serif;transform:scaleX(1.0296);">10,000</span>
<div class="b" style="left:27.4px;top:205.76000000000002px;width:59.4px;height:17.119999999999976px;background:#ddebf7;"></div>
<span class="t" id="t73" style="left:29px;top:207.62px;font-size:10px;line-height:14.0px;color:#444;font-weight:400;font-family:'Liberation Sans','Noto Sans CJK JP',sans-serif;transform:scaleX(0.9317);">8月</span>
<div class="b" style="left:88.9px;top:205.76000000000002px;width:49.599999999999994px;height:17.119999999999976px;background:#ffe699;"></div>
<span class="t" id="t74" style="left:105.70000000000002px;top:207.62px;font-size:10px;line-height:14.0px;color:#444;font-weight:400;font-family:'Liberation Sans','Noto Sans CJK JP',sans-serif;transform:scaleX(1.0296);">40,000</span>
<div class="b" style="left:140.3px;top:205.76000000000002px;width:59.19999999999999px;height:17.119999999999976px;background:#ffe699;"></div>
<span class="t" id="t75" style="left:166.70000000000002px;top:207.62px;font-size:10px;line-height:14.0px;color:#444;font-weight:400;font-family:'Liberation Sans','Noto Sans CJK JP',sans-serif;transform:scaleX(1.0296);">10,000</span>
<div class="b" style="left:201.3px;top:205.76000000000002px;width:50.19999999999999px;height:17.119999999999976px;background:#ffe699;"></div>
<span class="t" id="t76" style="left:218.70000000000002px;top:207.62px;font-size:10px;line-height:14.0px;color:#444;font-weight:400;font-family:'Liberation Sans','Noto Sans CJK JP',sans-serif;transform:scaleX(1.0296);">40,000</span>
<div class="b" style="left:253.3px;top:205.76000000000002px;width:49.80000000000001px;height:17.119999999999976px;background:#ffe699;"></div>
<span class="t" id="t77" style="left:270.3px;top:207.62px;font-size:10px;line-height:14.0px;color:#444;font-weight:400;font-family:'Liberation Sans','Noto Sans CJK JP',sans-serif;transform:scaleX(1.0296);">10,000</span>
<div class="b" style="left:304.9px;top:205.76000000000002px;width:49.700000000000045px;height:17.119999999999976px;background:#ffe699;"></div>
<span class="t" id="t78" style="left:321.8px;top:207.62px;font-size:10px;line-height:14.0px;color:#444;font-weight:400;font-family:'Liberation Sans','Noto Sans CJK JP',sans-serif;transform:scaleX(1.0296);">10,000</span>
<div class="b" style="left:356.4px;top:205.76000000000002px;width:49.700000000000045px;height:17.119999999999976px;background:#ffe699;"></div>
<span class="t" id="t79" style="left:373.3px;top:207.62px;font-size:10px;line-height:14.0px;color:#444;font-weight:400;font-family:'Liberation Sans','Noto Sans CJK JP',sans-serif;transform:scaleX(1.0296);">40,000</span>
<div class="b" style="left:27.4px;top:224.48000000000002px;width:59.4px;height:17.119999999999976px;background:#ddebf7;"></div>
<span class="t" id="t80" style="left:29px;top:226.34px;font-size:10px;line-height:14.0px;color:#444;font-weight:400;font-family:'Liberation Sans','Noto Sans CJK JP',sans-serif;transform:scaleX(0.9317);">9月</span>
<div class="b" style="left:88.9px;top:224.48000000000002px;width:49.599999999999994px;height:17.119999999999976px;background:#ffe699;"></div>
<span class="t" id="t81" style="left:105.70000000000002px;top:226.34px;font-size:10px;line-height:14.0px;color:#444;font-weight:400;font-family:'Liberation Sans','Noto Sans CJK JP',sans-serif;transform:scaleX(1.0296);">10,000</span>
<div class="b" style="left:140.3px;top:224.48000000000002px;width:59.19999999999999px;height:17.119999999999976px;background:#ffe699;"></div>
<span class="t" id="t82" style="left:166.70000000000002px;top:226.34px;font-size:10px;line-height:14.0px;color:#444;font-weight:400;font-family:'Liberation Sans','Noto Sans CJK JP',sans-serif;transform:scaleX(1.0296);">40,000</span>
<div class="b" style="left:201.3px;top:224.48000000000002px;width:50.19999999999999px;height:17.119999999999976px;background:#ffe699;"></div>
<span class="t" id="t83" style="left:218.70000000000002px;top:226.34px;font-size:10px;line-height:14.0px;color:#444;font-weight:400;font-family:'Liberation Sans','Noto Sans CJK JP',sans-serif;transform:scaleX(1.0296);">10,000</span>
<div class="b" style="left:253.3px;top:224.48000000000002px;width:49.80000000000001px;height:17.119999999999976px;background:#ffe699;"></div>
<span class="t" id="t84" style="left:270.3px;top:226.34px;font-size:10px;line-height:14.0px;color:#444;font-weight:400;font-family:'Liberation Sans','Noto Sans CJK JP',sans-serif;transform:scaleX(1.0296);">10,000</span>
<div class="b" style="left:304.9px;top:224.48000000000002px;width:49.700000000000045px;height:17.119999999999976px;background:#ffe699;"></div>
<span class="t" id="t85" style="left:321.8px;top:226.34px;font-size:10px;line-height:14.0px;color:#444;font-weight:400;font-family:'Liberation Sans','Noto Sans CJK JP',sans-serif;transform:scaleX(1.0296);">40,000</span>
<div class="b" style="left:356.4px;top:224.48000000000002px;width:49.700000000000045px;height:17.119999999999976px;background:#ffe699;"></div>
<span class="t" id="t86" style="left:373.3px;top:226.34px;font-size:10px;line-height:14.0px;color:#444;font-weight:400;font-family:'Liberation Sans','Noto Sans CJK JP',sans-serif;transform:scaleX(1.0296);">10,000</span>
<div class="b" style="left:27.4px;top:243.20000000000002px;width:59.4px;height:17.39999999999995px;background:#ddebf7;"></div>
<span class="t" id="t87" style="left:29.5px;top:245.45px;font-size:10px;line-height:14.0px;color:#111;font-weight:700;font-family:'Liberation Sans','Noto Sans CJK JP',sans-serif;transform:scaleX(1.025);">上期合計</span>
<div class="b" style="left:88.9px;top:243.20000000000002px;width:49.599999999999994px;height:17.39999999999995px;background:#ffe699;"></div>
<span class="t" id="t88" style="left:99.70000000000002px;top:245.45px;font-size:10px;line-height:14.0px;color:#111;font-weight:700;font-family:'Liberation Sans','Noto Sans CJK JP',sans-serif;transform:scaleX(1.0372);">132,000</span>
<div class="b" style="left:140.3px;top:243.20000000000002px;width:59.19999999999999px;height:17.39999999999995px;background:#ffe699;"></div>
<span class="t" id="t89" style="left:160.70000000000002px;top:245.45px;font-size:10px;line-height:14.0px;color:#111;font-weight:700;font-family:'Liberation Sans','Noto Sans CJK JP',sans-serif;transform:scaleX(1.0372);">130,000</span>
<div class="b" style="left:201.3px;top:243.20000000000002px;width:50.19999999999999px;height:17.39999999999995px;background:#ffe699;"></div>
<span class="t" id="t90" style="left:212.70000000000002px;top:245.45px;font-size:10px;line-height:14.0px;color:#111;font-weight:700;font-family:'Liberation Sans','Noto Sans CJK JP',sans-serif;transform:scaleX(1.0372);">120,000</span>
<div class="b" style="left:253.3px;top:243.20000000000002px;width:49.80000000000001px;height:17.39999999999995px;background:#ffe699;"></div>
<span class="t" id="t91" style="left:264.3px;top:245.45px;font-size:10px;line-height:14.0px;color:#111;font-weight:700;font-family:'Liberation Sans','Noto Sans CJK JP',sans-serif;transform:scaleX(1.0531);">112,000</span>
<div class="b" style="left:304.9px;top:243.20000000000002px;width:49.700000000000045px;height:17.39999999999995px;background:#ffe699;"></div>
<span class="t" id="t92" style="left:315.8px;top:245.45px;font-size:10px;line-height:14.0px;color:#111;font-weight:700;font-family:'Liberation Sans','Noto Sans CJK JP',sans-serif;transform:scaleX(1.0531);">110,000</span>
<div class="b" style="left:356.4px;top:243.20000000000002px;width:49.700000000000045px;height:17.39999999999995px;background:#ffe699;"></div>
<span class="t" id="t93" style="left:367.3px;top:245.45px;font-size:10px;line-height:14.0px;color:#111;font-weight:700;font-family:'Liberation Sans','Noto Sans CJK JP',sans-serif;transform:scaleX(1.0531);">112,000</span>
<div class="b" style="left:26.5px;top:242.1px;width:380.5px;height:2.0px;background:#5c5c5c;"></div>
<div class="b" style="left:43px;top:270px;width:351.6px;height:150.8px;background:#fff;"></div>
<div class="b" style="left:43px;top:269.5px;width:351.6px;height:1.0px;background:#8c8c8c;"></div>
<div class="b" style="left:42.5px;top:270px;width:1.0px;height:150.8px;background:#8c8c8c;"></div>
<div class="b" style="left:394.1px;top:270px;width:1.0px;height:150.8px;background:#8c8c8c;"></div>
<div class="b" style="left:83.5px;top:310.9px;width:299.5px;height:1.0px;background:#dedede;"></div>
<div class="b" style="left:83.5px;top:325.5px;width:299.5px;height:1.0px;background:#dedede;"></div>
<div class="b" style="left:83.5px;top:340.2px;width:299.5px;height:1.0px;background:#dedede;"></div>
<div class="b" style="left:83.5px;top:354.8px;width:299.5px;height:1.0px;background:#dedede;"></div>
<div class="b" style="left:83.5px;top:369.5px;width:299.5px;height:1.0px;background:#dedede;"></div>
<div class="b" style="left:83.5px;top:384.1px;width:299.5px;height:1.0px;background:#dedede;"></div>
<div class="b" style="left:83.5px;top:398.8px;width:299.5px;height:1.0px;background:#dedede;"></div>
<div class="b" style="left:83.5px;top:413.4px;width:299.5px;height:1.0px;background:#dedede;"></div>
<span class="t" id="t94" style="left:141.3px;top:278.55px;font-size:13.5px;line-height:18.9px;color:#606060;font-weight:300;font-family:'Liberation Sans','Noto Sans CJK JP',sans-serif;transform:scaleX(1.0162);">（上期）拠点別売上比較</span>
<div class="b" style="left:90px;top:335px;width:16px;height:85.80000000000001px;background:#4472c4;"></div>
<div class="b" style="left:141.8px;top:341px;width:16.0px;height:79.80000000000001px;background:#4472c4;"></div>
<div class="b" style="left:193.1px;top:370.3px;width:16.0px;height:50.5px;background:#4472c4;"></div>
<div class="b" style="left:245px;top:393.6px;width:16px;height:27.19999999999999px;background:#4472c4;"></div>
<div class="b" style="left:297.2px;top:399.4px;width:16.0px;height:21.400000000000034px;background:#4472c4;"></div>
<div class="b" style="left:349px;top:393.6px;width:16px;height:27.19999999999999px;background:#4472c4;"></div>
<svg class="b" style="left:38.5px;top:265.4px" width="9.2" height="9.2" viewBox="0 0 9.2 9.2"><circle cx="4.6" cy="4.6" r="3.6" fill="#fff" stroke="#555" stroke-width="1.2"/></svg>
<svg class="b" style="left:214.4px;top:265.4px" width="9.2" height="9.2" viewBox="0 0 9.2 9.2"><circle cx="4.6" cy="4.6" r="3.6" fill="#fff" stroke="#555" stroke-width="1.2"/></svg>
<svg class="b" style="left:390.0px;top:265.5px" width="9.2" height="9.2" viewBox="0 0 9.2 9.2"><circle cx="4.6" cy="4.6" r="3.6" fill="#fff" stroke="#555" stroke-width="1.2"/></svg>
<svg class="b" style="left:38.5px;top:371.0px" width="9.2" height="9.2" viewBox="0 0 9.2 9.2"><circle cx="4.6" cy="4.6" r="3.6" fill="#fff" stroke="#555" stroke-width="1.2"/></svg>
<svg class="b" style="left:390.0px;top:371.0px" width="9.2" height="9.2" viewBox="0 0 9.2 9.2"><circle cx="4.6" cy="4.6" r="3.6" fill="#fff" stroke="#555" stroke-width="1.2"/></svg>
<div class="b" style="left:51.6px;top:322.6px;width:21.199999999999996px;height:95.19999999999999px;background:#fff;border:1.2px solid #b4b4b4;box-sizing:border-box;"></div>
<span class="t" id="t95" style="left:57.1px;top:-6.7px;font-size:9.6px;line-height:13.4px;color:#ff4040;font-weight:400;font-family:'Liberation Sans','Noto Sans CJK JP',sans-serif;writing-mode:vertical-rl;top:327.4px;letter-spacing:0;line-height:11px;transform:scaleX(1);">売上（単位　千円）</span>
<svg class="b" style="left:49.1px;top:320.2px" width="6" height="6" viewBox="0 0 6 6"><circle cx="3" cy="3" r="2" fill="#fff" stroke="#2f8bd8" stroke-width="0.9"/></svg>
<svg class="b" style="left:68.9px;top:320.2px" width="6" height="6" viewBox="0 0 6 6"><circle cx="3" cy="3" r="2" fill="#fff" stroke="#2f8bd8" stroke-width="0.9"/></svg>
<svg class="b" style="left:49.1px;top:414.2px" width="6" height="6" viewBox="0 0 6 6"><circle cx="3" cy="3" r="2" fill="#fff" stroke="#2f8bd8" stroke-width="0.9"/></svg>
<svg class="b" style="left:68.9px;top:414.2px" width="6" height="6" viewBox="0 0 6 6"><circle cx="3" cy="3" r="2" fill="#fff" stroke="#2f8bd8" stroke-width="0.9"/></svg>
<div class="b" style="left:402.2px;top:269px;width:20.900000000000034px;height:20.69999999999999px;background:#fff;border:1px solid #b2b2b2;box-sizing:border-box;"></div>
<div class="b" style="left:402.2px;top:296.3px;width:20.900000000000034px;height:20.69999999999999px;background:#fff;border:1px solid #b2b2b2;box-sizing:border-box;"></div>
<div class="b" style="left:402.2px;top:323.9px;width:20.900000000000034px;height:20.69999999999999px;background:#fff;border:1px solid #b2b2b2;box-sizing:border-box;"></div>
<svg class="b" style="left:406.6px;top:273.3px" width="12" height="12" viewBox="0 0 12 12"><path d="M6 1.8V10.2M1.8 6H10.2" stroke="#3c9a72" stroke-width="2.3"/></svg>
<svg class="b" style="left:406px;top:299px" width="14" height="14" viewBox="0 0 14 14"><path d="M6.5 8 L12 2.2 L12.6 2.8 L8 9.5Z" fill="#555"/><path d="M2.5 12 C3 9.5 5 8.2 6.8 8.6 L7.6 9.6 C7.2 11.5 5 12.3 2.5 12Z" fill="#2b78c5"/></svg>
<svg class="b" style="left:406px;top:327px" width="14" height="14" viewBox="0 0 14 14"><path d="M1.5 2 H12.5 L8.3 7 V12.2 L5.7 10.8 V7Z" fill="#6a6a6a"/></svg>
<div class="b" style="left:485.6px;top:131px;width:2.7999999999999545px;height:289.8px;background:#c4c4c4;"></div>
<div class="b" style="left:487.6px;top:131px;width:10.399999999999977px;height:289.8px;background:#fff;"></div>
<div class="b" style="left:498px;top:131px;width:116.5px;height:289.8px;background:#e6e6e6;"></div>
<div class="b" style="left:497.8px;top:131px;width:1.3999999999999773px;height:289.8px;background:#9a9a9a;"></div>
<svg class="b" style="left:525.8px;top:286px" width="10" height="10" viewBox="0 0 10 10"><circle cx="5" cy="5" r="4" fill="#fff" stroke="#8c8c8c" stroke-width="0.8"/></svg>
<svg class="b" style="left:525.8px;top:302px" width="10" height="10" viewBox="0 0 10 10"><circle cx="5" cy="5" r="4" fill="#fff" stroke="#8c8c8c" stroke-width="0.8"/></svg>
<svg class="b" style="left:525.8px;top:319px" width="10" height="10" viewBox="0 0 10 10"><circle cx="5" cy="5" r="4" fill="#fff" stroke="#8c8c8c" stroke-width="0.8"/><circle cx="5" cy="5" r="2.3" fill="#111"/></svg>
<span class="t" id="t96" style="left:540px;top:284.7px;font-size:9px;line-height:12.6px;color:#333;font-weight:400;font-family:'Liberation Sans','Noto Sans CJK JP',sans-serif;transform:scaleX(0.9471);">線 (単色)(<u>S</u>)</span>
<span class="t" id="t97" style="left:540px;top:300.7px;font-size:9px;line-height:12.6px;color:#333;font-weight:400;font-family:'Liberation Sans','Noto Sans CJK JP',sans-serif;transform:scaleX(0.8226);">線 (グラデーション)(<u>G</u></span>
<span class="t" id="t98" style="left:540px;top:317.9px;font-size:9px;line-height:12.6px;color:#222;font-weight:400;font-family:'Liberation Sans','Noto Sans CJK JP',sans-serif;transform:scaleX(1.0164);">自動(<u>U</u>)</span>
<div class="b" style="left:526px;top:335px;width:88.5px;height:1px;background:#cfcfcf;"></div>
<span class="t" id="t99" style="left:533.7px;top:343.9px;font-size:9px;line-height:12.6px;color:#333;font-weight:400;font-family:'Liberation Sans','Noto Sans CJK JP',sans-serif;transform:scaleX(1.0372);">色(<u>C</u>)</span>
<span class="t" id="t100" style="left:533.7px;top:366.1px;font-size:9px;line-height:12.6px;color:#333;font-weight:400;font-family:'Liberation Sans','Noto Sans CJK JP',sans-serif;transform:scaleX(1.0468);">透明度(<u>T</u>)</span>
<div class="b" style="left:581.3px;top:369px;width:1.2000000000000455px;height:7px;background:#333;"></div>
<div class="b" style="left:585px;top:372px;width:29.5px;height:1px;background:#c0c0c0;"></div>
<span class="t" id="t101" style="left:533.7px;top:386.2px;font-size:9px;line-height:12.6px;color:#333;font-weight:400;font-family:'Liberation Sans','Noto Sans CJK JP',sans-serif;transform:scaleX(1.0979);">幅(<u>W</u>)</span>
<span class="t" id="t102" style="left:533.7px;top:408.5px;font-size:9px;line-height:12.6px;color:#333;font-weight:400;font-family:'Liberation Sans','Noto Sans CJK JP',sans-serif;transform:scaleX(1.0174);">一重線/多重線(<u>C</u>)</span>
<div class="b" style="left:467.4px;top:46.6px;width:146.80000000000007px;height:243.79999999999998px;background:#fff;border:1px solid #c6c6c6;box-sizing:border-box;box-shadow:1px 1px 3px rgba(0,0,0,0.25);"></div>
<div class="b" style="left:613.3px;top:46.6px;width:1.7000000000000455px;height:243.79999999999998px;background:#d0d0d0;"></div>
<div class="b" style="left:471.8px;top:50.3px;width:11.599999999999966px;height:11.5px;background:#000;border:1px solid #8a8a8a;box-sizing:border-box;"></div>
<span class="t" id="t103" style="left:492px;top:49.75px;font-size:9.5px;line-height:13.3px;color:#666;font-weight:400;font-family:'Liberation Sans','Noto Sans CJK JP',sans-serif;transform:scaleX(0.9878);">自動(<u>A</u>)</span>
<div class="b" style="left:468.4px;top:64px;width:143.80000000000007px;height:17px;background:#e9e9e9;"></div>
<span class="t" id="t104" style="left:474.8px;top:66.45px;font-size:9.5px;line-height:13.3px;color:#444;font-weight:500;font-family:'Liberation Sans','Noto Sans CJK JP',sans-serif;transform:scaleX(0.7997);">テーマの色</span>
<div class="b" style="left:470.6px;top:82.8px;width:8.300000000000011px;height:8.200000000000003px;background:#ffffff;border:1px solid #e6e6e6;box-sizing:border-box;"></div>
<div class="b" style="left:470.6px;top:95.8px;width:8.300000000000011px;height:9.0px;background:#f2f2f2;"></div>
<div class="b" style="left:470.6px;top:104.75px;width:8.300000000000011px;height:9.0px;background:#d9d9d9;"></div>
<div class="b" style="left:470.6px;top:113.69999999999999px;width:8.300000000000011px;height:9.0px;background:#bfbfbf;"></div>
<div class="b" style="left:470.6px;top:122.64999999999999px;width:8.300000000000011px;height:8.999999999999986px;background:#a6a6a6;"></div>
<div class="b" style="left:470.6px;top:131.6px;width:8.300000000000011px;height:8.900000000000006px;background:#808080;"></div>
<div class="b" style="left:482.35px;top:82.8px;width:8.300000000000011px;height:8.200000000000003px;background:#000000;"></div>
<div class="b" style="left:482.35px;top:95.8px;width:8.300000000000011px;height:9.0px;background:#808080;"></div>
<div class="b" style="left:482.35px;top:104.75px;width:8.300000000000011px;height:9.0px;background:#595959;"></div>
<div class="b" style="left:482.35px;top:113.69999999999999px;width:8.300000000000011px;height:9.0px;background:#404040;"></div>
<div class="b" style="left:482.35px;top:122.64999999999999px;width:8.300000000000011px;height:8.999999999999986px;background:#262626;"></div>
<div class="b" style="left:482.35px;top:131.6px;width:8.300000000000011px;height:8.900000000000006px;background:#0d0d0d;"></div>
<div class="b" style="left:494.1px;top:82.8px;width:8.300000000000011px;height:8.200000000000003px;background:#e7e6e6;"></div>
<div class="b" style="left:494.1px;top:95.8px;width:8.300000000000011px;height:9.0px;background:#d0cece;"></div>
<div class="b" style="left:494.1px;top:104.75px;width:8.300000000000011px;height:9.0px;background:#aeaaaa;"></div>
<div class="b" style="left:494.1px;top:113.69999999999999px;width:8.300000000000011px;height:9.0px;background:#757171;"></div>
<div class="b" style="left:494.1px;top:122.64999999999999px;width:8.300000000000011px;height:8.999999999999986px;background:#3a3838;"></div>
<div class="b" style="left:494.1px;top:131.6px;width:8.300000000000011px;height:8.900000000000006px;background:#161616;"></div>
<div class="b" style="left:505.85px;top:82.8px;width:8.299999999999955px;height:8.200000000000003px;background:#44546a;"></div>
<div class="b" style="left:505.85px;top:95.8px;width:8.299999999999955px;height:9.0px;background:#d6dce5;"></div>
<div class="b" style="left:505.85px;top:104.75px;width:8.299999999999955px;height:9.0px;background:#adb9ca;"></div>
<div class="b" style="left:505.85px;top:113.69999999999999px;width:8.299999999999955px;height:9.0px;background:#8497b0;"></div>
<div class="b" style="left:505.85px;top:122.64999999999999px;width:8.299999999999955px;height:8.999999999999986px;background:#333f50;"></div>
<div class="b" style="left:505.85px;top:131.6px;width:8.299999999999955px;height:8.900000000000006px;background:#222a35;"></div>
<div class="b" style="left:517.6px;top:82.8px;width:8.299999999999955px;height:8.200000000000003px;background:#4472c4;"></div>
<div class="b" style="left:517.6px;top:95.8px;width:8.299999999999955px;height:9.0px;background:#dae3f3;"></div>
<div class="b" style="left:517.6px;top:104.75px;width:8.299999999999955px;height:9.0px;background:#b4c7e7;"></div>
<div class="b" style="left:517.6px;top:113.69999999999999px;width:8.299999999999955px;height:9.0px;background:#8faadc;"></div>
<div class="b" style="left:517.6px;top:122.64999999999999px;width:8.299999999999955px;height:8.999999999999986px;background:#2f5597;"></div>
<div class="b" style="left:517.6px;top:131.6px;width:8.299999999999955px;height:8.900000000000006px;background:#203864;"></div>
<div class="b" style="left:529.35px;top:82.8px;width:8.299999999999955px;height:8.200000000000003px;background:#ed7d31;"></div>
<div class="b" style="left:529.35px;top:95.8px;width:8.299999999999955px;height:9.0px;background:#fbe5d6;"></div>
<div class="b" style="left:529.35px;top:104.75px;width:8.299999999999955px;height:9.0px;background:#f8cbad;"></div>
<div class="b" style="left:529.35px;top:113.69999999999999px;width:8.299999999999955px;height:9.0px;background:#f4b183;"></div>
<div class="b" style="left:529.35px;top:122.64999999999999px;width:8.299999999999955px;height:8.999999999999986px;background:#c55a11;"></div>
<div class="b" style="left:529.35px;top:131.6px;width:8.299999999999955px;height:8.900000000000006px;background:#843c0c;"></div>
<div class="b" style="left:541.1px;top:82.8px;width:8.299999999999955px;height:8.200000000000003px;background:#a5a5a5;"></div>
<div class="b" style="left:541.1px;top:95.8px;width:8.299999999999955px;height:9.0px;background:#ededed;"></div>
<div class="b" style="left:541.1px;top:104.75px;width:8.299999999999955px;height:9.0px;background:#dbdbdb;"></div>
<div class="b" style="left:541.1px;top:113.69999999999999px;width:8.299999999999955px;height:9.0px;background:#c9c9c9;"></div>
<div class="b" style="left:541.1px;top:122.64999999999999px;width:8.299999999999955px;height:8.999999999999986px;background:#7c7c7c;"></div>
<div class="b" style="left:541.1px;top:131.6px;width:8.299999999999955px;height:8.900000000000006px;background:#525252;"></div>
<div class="b" style="left:552.85px;top:82.8px;width:8.299999999999955px;height:8.200000000000003px;background:#ffc000;"></div>
<div class="b" style="left:552.85px;top:95.8px;width:8.299999999999955px;height:9.0px;background:#fff2cc;"></div>
<div class="b" style="left:552.85px;top:104.75px;width:8.299999999999955px;height:9.0px;background:#ffe699;"></div>
<div class="b" style="left:552.85px;top:113.69999999999999px;width:8.299999999999955px;height:9.0px;background:#ffd966;"></div>
<div class="b" style="left:552.85px;top:122.64999999999999px;width:8.299999999999955px;height:8.999999999999986px;background:#bf9000;"></div>
<div class="b" style="left:552.85px;top:131.6px;width:8.299999999999955px;height:8.900000000000006px;background:#7f6000;"></div>
<div class="b" style="left:564.6px;top:82.8px;width:8.299999999999955px;height:8.200000000000003px;background:#5b9bd5;"></div>
<div class="b" style="left:564.6px;top:95.8px;width:8.299999999999955px;height:9.0px;background:#deebf7;"></div>
<div class="b" style="left:564.6px;top:104.75px;width:8.299999999999955px;height:9.0px;background:#bdd7ee;"></div>
<div class="b" style="left:564.6px;top:113.69999999999999px;width:8.299999999999955px;height:9.0px;background:#9dc3e6;"></div>
<div class="b" style="left:564.6px;top:122.64999999999999px;width:8.299999999999955px;height:8.999999999999986px;background:#2e75b6;"></div>
<div class="b" style="left:564.6px;top:131.6px;width:8.299999999999955px;height:8.900000000000006px;background:#1f4e79;"></div>
<div class="b" style="left:576.35px;top:82.8px;width:8.299999999999955px;height:8.200000000000003px;background:#70ad47;"></div>
<div class="b" style="left:576.35px;top:95.8px;width:8.299999999999955px;height:9.0px;background:#e2f0d9;"></div>
<div class="b" style="left:576.35px;top:104.75px;width:8.299999999999955px;height:9.0px;background:#c5e0b4;"></div>
<div class="b" style="left:576.35px;top:113.69999999999999px;width:8.299999999999955px;height:9.0px;background:#a9d18e;"></div>
<div class="b" style="left:576.35px;top:122.64999999999999px;width:8.299999999999955px;height:8.999999999999986px;background:#548235;"></div>
<div class="b" style="left:576.35px;top:131.6px;width:8.299999999999955px;height:8.900000000000006px;background:#385723;"></div>
<div class="b" style="left:468.4px;top:144.1px;width:143.80000000000007px;height:16.900000000000006px;background:#e9e9e9;"></div>
<span class="t" id="t105" style="left:475px;top:146.9px;font-size:9px;line-height:12.6px;color:#555;font-weight:500;font-family:'Liberation Sans','Noto Sans CJK JP',sans-serif;transform:scaleX(0.8746);">標準の色</span>
<div class="b" style="left:470.6px;top:163px;width:8.300000000000011px;height:8.199999999999989px;background:#c00000;"></div>
<div class="b" style="left:482.35px;top:163px;width:8.300000000000011px;height:8.199999999999989px;background:#ff0000;"></div>
<div class="b" style="left:494.1px;top:163px;width:8.300000000000011px;height:8.199999999999989px;background:#ffc000;"></div>
<div class="b" style="left:505.85px;top:163px;width:8.299999999999955px;height:8.199999999999989px;background:#ffff00;"></div>
<div class="b" style="left:517.6px;top:163px;width:8.299999999999955px;height:8.199999999999989px;background:#92d050;"></div>
<div class="b" style="left:529.35px;top:163px;width:8.299999999999955px;height:8.199999999999989px;background:#00b050;"></div>
<div class="b" style="left:541.1px;top:163px;width:8.299999999999955px;height:8.199999999999989px;background:#00b0f0;"></div>
<div class="b" style="left:552.85px;top:163px;width:8.299999999999955px;height:8.199999999999989px;background:#0070c0;"></div>
<div class="b" style="left:564.6px;top:163px;width:8.299999999999955px;height:8.199999999999989px;background:#002060;"></div>
<div class="b" style="left:576.35px;top:163px;width:8.299999999999955px;height:8.199999999999989px;background:#7030a0;"></div>
<div class="b" style="left:468.4px;top:172.7px;width:143.80000000000007px;height:16.900000000000006px;background:#e9e9e9;"></div>
<span class="t" id="t106" style="left:475px;top:175.6px;font-size:9px;line-height:12.6px;color:#555;font-weight:500;font-family:'Liberation Sans','Noto Sans CJK JP',sans-serif;transform:scaleX(0.849);">最近使用した色</span>
<div class="b" style="left:470.6px;top:192px;width:8.300000000000011px;height:8px;background:#ff6699;"></div>
<div class="b" style="left:482.35px;top:192px;width:8.300000000000011px;height:8px;background:#f8cdc4;"></div>
<div class="b" style="left:471.5px;top:204.5px;width:11.0px;height:10.5px;background:#fff;border:1px solid #e2e2e2;box-sizing:border-box;"></div>
<span class="t" id="t107" style="left:491.7px;top:204.7px;font-size:9px;line-height:12.6px;color:#666;font-weight:400;font-family:'Liberation Sans','Noto Sans CJK JP',sans-serif;transform:scaleX(0.8374);">塗りつぶしなし(<u>N</u>)</span>
<div class="b" style="left:468.4px;top:218.5px;width:144.80000000000007px;height:1.0px;background:#e1e1e1;"></div>
<svg class="b" style="left:471.5px;top:222.5px" width="12" height="12" viewBox="0 0 12 12"><circle cx="6" cy="6" r="5.3" fill="#e9a23b"/><path d="M6 6 L6 0.7 A5.3 5.3 0 0 1 11 4.4Z" fill="#d9534f"/><path d="M6 6 L11 4.4 A5.3 5.3 0 0 1 9.1 10.3Z" fill="#4a86c8"/><path d="M6 6 L9.1 10.3 A5.3 5.3 0 0 1 2.9 10.3Z" fill="#5aa469"/><path d="M6 6 L2.9 10.3 A5.3 5.3 0 0 1 1 4.4Z" fill="#2b78c5"/><circle cx="6" cy="6" r="1.6" fill="#fff"/></svg>
<span class="t" id="t108" style="left:491.7px;top:222.2px;font-size:9px;line-height:12.6px;color:#555;font-weight:400;font-family:'Liberation Sans','Noto Sans CJK JP',sans-serif;transform:scaleX(0.8643);">その他の塗りつぶしの色(<u>M</u>)...</span>
<svg class="b" style="left:471.5px;top:241px" width="12" height="11" viewBox="0 0 12 11"><rect x="0.5" y="0.5" width="11" height="10" fill="#fff" stroke="#777" stroke-width="0.8"/><path d="M1 9.5 L4.5 5 L7 8 L8.5 6.5 L11 9.5Z" fill="#2b78c5"/><circle cx="8.5" cy="3.3" r="1" fill="#2b78c5"/></svg>
<span class="t" id="t109" style="left:491.7px;top:240.3px;font-size:9px;line-height:12.6px;color:#555;font-weight:400;font-family:'Liberation Sans','Noto Sans CJK JP',sans-serif;transform:scaleX(1.0801);">図(<u>P</u>)...</span>
<div class="b" style="left:472px;top:258px;width:10.5px;height:10.5px;box-sizing:border-box;border:1px solid #777;background:linear-gradient(135deg,#fafafa,#8e8e8e);"></div>
<span class="t" id="t110" style="left:491.7px;top:257.1px;font-size:9px;line-height:12.6px;color:#555;font-weight:400;font-family:'Liberation Sans','Noto Sans CJK JP',sans-serif;transform:scaleX(0.7885);">グラデーション(<u>G</u>)</span>
<svg class="b" style="left:601.5px;top:260.5px" width="4" height="6" viewBox="0 0 4 6"><path d="M0.5 0.5 L3.5 3 L0.5 5.5Z" fill="#444"/></svg>
<svg class="b" style="left:471.5px;top:276px" width="12" height="11" viewBox="0 0 12 11"><rect x="0.5" y="0.5" width="11" height="10" fill="#eef3f8" stroke="#777" stroke-width="0.8"/><path d="M1 7 L7 1 M1 10 L10 1 M4 10.5 L11 3.5 M8 10.5 L11 7.5" stroke="#b9c9dc" stroke-width="0.8"/></svg>
<span class="t" id="t111" style="left:491.7px;top:275.1px;font-size:9px;line-height:12.6px;color:#555;font-weight:400;font-family:'Liberation Sans','Noto Sans CJK JP',sans-serif;transform:scaleX(0.8158);">テクスチャ(<u>T</u>)</span>
<svg class="b" style="left:601.5px;top:278.5px" width="4" height="6" viewBox="0 0 4 6"><path d="M0.5 0.5 L3.5 3 L0.5 5.5Z" fill="#444"/></svg>
<div class="b" style="left:485.7px;top:185.5px;width:24.100000000000023px;height:16.400000000000006px;background:#fff;border:1px solid #cfcfcf;box-sizing:border-box;box-shadow:1px 1px 2px rgba(0,0,0,0.2);"></div>
<span class="t" id="t112" style="left:489.7px;top:187.65px;font-size:8.5px;line-height:11.9px;color:#666;font-weight:400;font-family:'Liberation Sans','Noto Sans CJK JP',sans-serif;transform:scaleX(0.9277);">赤</span>
<div class="b" style="left:468px;top:30px;width:29.19999999999999px;height:16.200000000000003px;background:#c6c6c6;border:1px solid #b4b4b4;box-sizing:border-box;"></div>
<span class="t" id="t113" style="left:472.3px;top:28.65px;font-size:10.5px;line-height:14.7px;color:#333;font-weight:400;font-family:'Liberation Sans','Noto Sans CJK JP',sans-serif;transform:scaleX(1.069);">A</span>
<div class="b" style="left:470.2px;top:40.7px;width:11.400000000000034px;height:2.3999999999999986px;background:#000;"></div>
<svg class="b" style="left:487.5px;top:36px" width="5" height="4" viewBox="0 0 5 4"><path d="M0.5 0.7 L2.5 2.8 L4.5 0.7" fill="none" stroke="#444" stroke-width="0.8"/></svg>
<div class="b" style="left:462px;top:28px;width:37.19999999999999px;height:22.299999999999997px;border:2.1px solid #fc0a0a;box-sizing:border-box;"></div>
<div class="b" style="left:499px;top:8px;width:39.5px;height:38.3px;background:#fff;border:1px solid #000;box-sizing:border-box;"></div>
<span class="t" id="t114" style="left:511.3px;top:15.35px;font-size:19.5px;line-height:27.3px;color:#111;font-weight:400;font-family:'Liberation Serif','Noto Serif CJK SC',serif;transform:scaleX(1.1487);">2</span>
<div class="b" style="left:478.2px;top:157px;width:18.900000000000034px;height:22.099999999999994px;border:2.1px solid #fc0a0a;box-sizing:border-box;"></div>
<div class="b" style="left:502.2px;top:147.1px;width:38.80000000000001px;height:38.30000000000001px;background:#fff;border:1px solid #000;box-sizing:border-box;"></div>
<span class="t" id="t115" style="left:514.8px;top:155.7px;font-size:17px;line-height:23.8px;color:#111;font-weight:400;font-family:'Liberation Sans','Noto Sans CJK JP',sans-serif;transform:scaleX(0.8871);">3</span>
<div class="b" style="left:45px;top:279.1px;width:39px;height:38.599999999999966px;background:#fff;border:1px solid #000;box-sizing:border-box;"></div>
<span class="t" id="t116" style="left:57.3px;top:285.65px;font-size:20.5px;line-height:28.7px;color:#111;font-weight:400;font-family:'Liberation Serif','Noto Serif CJK SC',serif;transform:scaleX(0.8976);">1</span>
<div class="b" style="left:43.7px;top:317.6px;width:37.89999999999999px;height:106.39999999999998px;border:2px solid #fc0a0a;box-sizing:border-box;"></div>
<div class="b" style="left:615px;top:0px;width:5px;height:428px;background:#fff;"></div>
</body></html>
